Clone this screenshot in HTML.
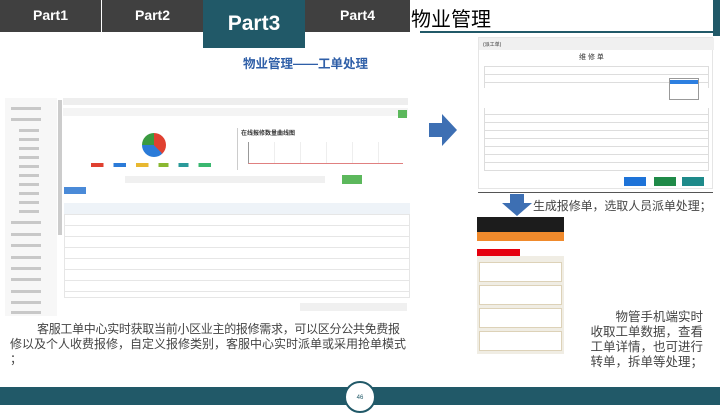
<!DOCTYPE html>
<html><head><meta charset="utf-8"><style>
*{margin:0;padding:0;box-sizing:border-box}
body{width:720px;height:405px;position:relative;overflow:hidden;background:#fff;font-family:"Liberation Sans","Noto Sans CJK SC",sans-serif}
.a{position:absolute}
.tab{position:absolute;top:0;height:32px;width:101px;background:#404040;color:#fff;font-size:14px;font-weight:bold;text-align:center;line-height:30px}
.t{color:#444;white-space:nowrap}
.sb{position:absolute;left:6px;width:30px;height:3px;background:#c8c8c8}
</style></head><body>
<div class="tab" style="left:0">Part1</div>
<div class="tab" style="left:102px">Part2</div>
<div class="tab" style="left:305px;width:105px">Part4</div>
<div class="a" style="left:203px;top:0;width:102px;height:48px;background:#215968;color:#fff;font-size:21px;font-weight:bold;text-align:center;line-height:48px">Part3</div>
<div class="a" style="left:411px;top:3px;font-size:20px;color:#000">物业管理</div>
<div class="a" style="left:420px;top:31px;width:293px;height:2px;background:#215968"></div>
<div class="a" style="left:713px;top:0;width:7px;height:36px;background:#215968"></div>
<div class="a" style="left:243px;top:53px;font-size:12.5px;font-weight:bold;color:#2f5fa8">物业管理——工单处理</div>

<!-- main screenshot -->
<div class="a" style="left:5px;top:98px;width:405px;height:218px;background:#fff">
 <div class="a" style="left:0;top:0;width:52px;height:218px;background:#f7f7f7">
  <div class="sb" style="top:9px"></div><div class="sb" style="top:20px"></div>
  <div class="sb" style="top:31px;left:14px;width:20px"></div><div class="sb" style="top:40px;left:14px;width:20px"></div>
  <div class="sb" style="top:49px;left:14px;width:20px"></div><div class="sb" style="top:58px;left:14px;width:20px"></div>
  <div class="sb" style="top:67px;left:14px;width:20px"></div><div class="sb" style="top:76px;left:14px;width:20px"></div>
  <div class="sb" style="top:85px;left:14px;width:20px"></div><div class="sb" style="top:94px;left:14px;width:20px"></div>
  <div class="sb" style="top:103px;left:14px;width:20px"></div><div class="sb" style="top:112px;left:14px;width:20px"></div>
  <div class="sb" style="top:123px"></div><div class="sb" style="top:135px"></div><div class="sb" style="top:146px"></div>
  <div class="sb" style="top:158px"></div><div class="sb" style="top:169px"></div><div class="sb" style="top:180px"></div>
  <div class="sb" style="top:192px"></div><div class="sb" style="top:203px"></div><div class="sb" style="top:213px"></div>
 </div>
 <div class="a" style="left:53px;top:2px;width:4px;height:135px;background:#ccc"></div>
 <div class="a" style="left:58px;top:0;width:345px;height:7px;background:#eee"></div>
 <div class="a" style="left:58px;top:10px;width:345px;height:8px;background:#f4f4f4"></div>
 <div class="a" style="left:393px;top:12px;width:9px;height:8px;background:#5cb85c"></div>
 <div class="a" style="left:137px;top:35px;width:24px;height:24px;border-radius:50%;background:conic-gradient(#e04030 0 38%,#2b7bd8 38% 75%,#3a9a40 75% 100%)"></div>
 <div class="a" style="left:86px;top:65px;width:125px;height:4px;background:linear-gradient(90deg,#e04030 10%,#fff 10% 18%,#2b7bd8 18% 28%,#fff 28% 36%,#e8b830 36% 46%,#fff 46% 54%,#8ab830 54% 62%,#fff 62% 70%,#2a9a9a 70% 78%,#fff 78% 86%,#3ab870 86% 96%,#fff 96%)"></div>
 <div class="a" style="left:232px;top:30px;width:1px;height:42px;background:#ccc"></div>
 <div class="a" style="left:236px;top:30px;font-size:6px;font-weight:bold;color:#333">在线报修数量曲线图</div>
 <div class="a" style="left:243px;top:44px;width:155px;height:22px;border-left:1px solid #999;border-bottom:1px solid #e08080;background:repeating-linear-gradient(90deg,transparent 0 25px,#eee 25px 26px)"></div>
 <div class="a" style="left:120px;top:78px;width:200px;height:7px;background:#f0f0f0"></div>
 <div class="a" style="left:337px;top:77px;width:20px;height:9px;background:#5cb85c"></div>
 <div class="a" style="left:59px;top:89px;width:22px;height:7px;background:#4a8ad8"></div>
 <div class="a" style="left:59px;top:105px;width:346px;height:95px;background:repeating-linear-gradient(180deg,#fff 0 10px,#e6e6e6 10px 11px);border:1px solid #e6e6e6"></div>
 <div class="a" style="left:59px;top:105px;width:346px;height:11px;background:#eef3f8"></div>
 <div class="a" style="left:295px;top:205px;width:107px;height:8px;background:#f0f0f0"></div>
</div>

<svg class="a" style="left:429px;top:114px" width="28" height="32"><path d="M0 9H13V0L28 16 13 32V23H0Z" fill="#3d6fb3"/></svg>

<!-- form -->
<div class="a" style="left:478px;top:37px;width:235px;height:152px;background:#fff;border:1px solid #e5e5e5">
 <div class="a" style="left:0;top:0;width:235px;height:12px;background:#f0f0f0;font-size:5px;padding:3px 4px;color:#333">(派工单)</div>
 <div class="a" style="left:100px;top:14px;font-size:7px;color:#333">维 修 单</div>
 <div class="a" style="left:5px;top:28px;width:225px;height:105px;background:repeating-linear-gradient(180deg,#fff 0 7px,#ddd 7px 8px);border:1px solid #ddd"></div>
 <div class="a" style="left:5px;top:50px;width:225px;height:20px;background:#fff"></div>
 <div class="a" style="left:190px;top:40px;width:30px;height:22px;background:#fff;border:1px solid #999"></div>
 <div class="a" style="left:191px;top:42px;width:28px;height:4px;background:#2d7fe0"></div>
 <div class="a" style="left:145px;top:139px;width:22px;height:9px;background:#1e73d8"></div>
 <div class="a" style="left:175px;top:139px;width:22px;height:9px;background:#1f8a48"></div>
 <div class="a" style="left:203px;top:139px;width:22px;height:9px;background:#1e8a8a"></div>
</div>
<div class="a" style="left:478px;top:192px;width:235px;height:1px;background:#555"></div>
<svg class="a" style="left:502px;top:194px" width="30" height="22"><path d="M8 0H22V9H30L15 22 0 9H8Z" fill="#3d6fb3"/></svg>
<div class="a t" style="left:533px;top:197px;font-size:12px;letter-spacing:-0.1px">生成报修单，选取人员派单处理；</div>

<!-- phone -->
<div class="a" style="left:477px;top:217px;width:87px;height:152px;background:#f0ede4">
 <div class="a" style="left:0;top:0;width:87px;height:15px;background:#1c1c1c"></div>
 <div class="a" style="left:0;top:15px;width:87px;height:9px;background:#f08a2c"></div>
 <div class="a" style="left:0;top:24px;width:87px;height:8px;background:#fff"></div>
 <div class="a" style="left:0;top:32px;width:43px;height:7px;background:#e5000f"></div>
 <div class="a" style="left:43px;top:32px;width:44px;height:7px;background:#fff"></div>
 <div class="a" style="left:2px;top:45px;width:83px;height:20px;background:#fff;border:1px solid #ddd2b8"></div>
 <div class="a" style="left:2px;top:68px;width:83px;height:20px;background:#fff;border:1px solid #ddd2b8"></div>
 <div class="a" style="left:2px;top:91px;width:83px;height:20px;background:#fff;border:1px solid #ddd2b8"></div>
 <div class="a" style="left:2px;top:114px;width:83px;height:20px;background:#fff;border:1px solid #ddd2b8"></div>
 <div class="a" style="left:0;top:137px;width:87px;height:15px;background:#fff"></div>
</div>

<div class="a t" style="left:580px;top:310px;width:123px;text-align:right;font-size:12.5px;line-height:15px">物管手机端实时<br>收取工单数据，查看<br>工单详情，也可进行<br>转单，拆单等处理；</div>
<div class="a t" style="left:10px;top:322px;font-size:12px;line-height:15px"><span style="margin-left:27px;letter-spacing:-0.3px">客服工单中心实时获取当前小区业主的报修需求，可以区分公共免费报</span><br>修以及个人收费报修，自定义报修类别，客服中心实时派单或采用抢单模式<br>；</div>

<div class="a" style="left:0;top:387px;width:720px;height:18px;background:#215968"></div>
<div class="a" style="left:344px;top:381px;width:32px;height:32px;border-radius:50%;background:#fff;border:2px solid #215968;font-size:6px;color:#215968;text-align:center;line-height:30px">46</div>
</body></html>
